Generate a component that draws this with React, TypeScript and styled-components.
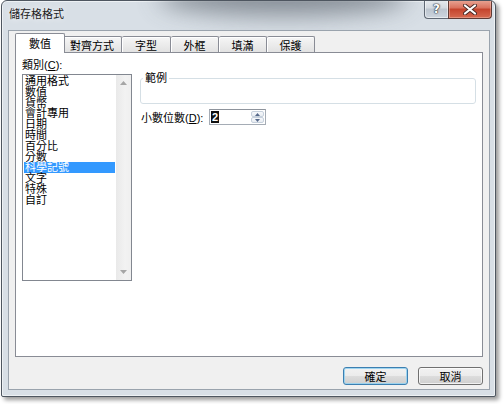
import React from "react";
import styled, { createGlobalStyle } from "styled-components";

const tabs = [
  { label: "數值", width: 46 },
  { label: "對齊方式", width: 59 },
  { label: "字型", width: 49 },
  { label: "外框", width: 48 },
  { label: "填滿", width: 48 },
  { label: "保護", width: 48 },
];

const categories = [
  "通用格式",
  "數值",
  "貨幣",
  "會計專用",
  "日期",
  "時間",
  "百分比",
  "分數",
  "科學記號",
  "文字",
  "特殊",
  "自訂",
];

function Arrow({ up, color, size = 7 }: { up?: boolean; color: string; size?: number }) {
  const h = Math.round(size / 2);
  return (
    <svg width={size} height={h} viewBox={`0 0 ${size} ${h}`}>
      <path
        d={up ? `M0 ${h} L${size / 2} 0 L${size} ${h} Z` : `M0 0 L${size} 0 L${size / 2} ${h} Z`}
        fill={color}
      />
    </svg>
  );
}

function App() {
  const [activeTab, setActiveTab] = React.useState(0);
  const [selected, setSelected] = React.useState(8);

  return (
    <Page>
      <GlobalStyle />
      <Window>
        <TitleBar>
          <Title>儲存格格式</Title>
          <CaptionButtons>
            <HelpButton>?</HelpButton>
            <CloseButton>
              <svg width="14" height="11" viewBox="0 0 14 11">
                <path d="M2 1.5 L12 9.5 M12 1.5 L2 9.5" stroke="#4a2a26" strokeWidth="4" strokeLinecap="round" />
                <path d="M2 1.5 L12 9.5 M12 1.5 L2 9.5" stroke="#ffffff" strokeWidth="2.2" strokeLinecap="round" />
              </svg>
            </CloseButton>
          </CaptionButtons>
        </TitleBar>

        <Client>
          <TabStrip>
            {tabs.map((tab, index) => (
              <Tab
                key={tab.label}
                $width={tab.width}
                $active={index === activeTab}
                $first={index === 0}
                onClick={() => setActiveTab(index)}
              >
                {tab.label}
              </Tab>
            ))}
          </TabStrip>

          <Panel>
            <LeftColumn>
              <FieldLabel>
                類別(<u>C</u>):
              </FieldLabel>
              <ListBox>
                <ListItems>
                  {categories.map((item, index) => (
                    <ListItem key={item} $selected={index === selected} onClick={() => setSelected(index)}>
                      {item}
                    </ListItem>
                  ))}
                </ListItems>
                <ScrollBar>
                  <ScrollArrow>
                    <Arrow up color="#a6a6a6" />
                  </ScrollArrow>
                  <ScrollArrow>
                    <Arrow color="#a6a6a6" />
                  </ScrollArrow>
                </ScrollBar>
              </ListBox>
            </LeftColumn>

            <RightColumn>
              <Sample>
                <SampleLegend>範例</SampleLegend>
              </Sample>
              <DecimalRow>
                <DecimalLabel>
                  小數位數(<u>D</u>):
                </DecimalLabel>
                <SpinBox>
                  <SpinValue>
                    <Selection>2</Selection>
                  </SpinValue>
                  <SpinButtons>
                    <SpinButton>
                      <Arrow up color="#56698a" size={5} />
                    </SpinButton>
                    <SpinButton>
                      <Arrow color="#56698a" size={5} />
                    </SpinButton>
                  </SpinButtons>
                </SpinBox>
              </DecimalRow>
            </RightColumn>
          </Panel>

          <ButtonRow>
            <DialogButton $default>確定</DialogButton>
            <DialogButton>取消</DialogButton>
          </ButtonRow>
        </Client>
      </Window>
    </Page>
  );
}

const GlobalStyle = createGlobalStyle`
  html, body {
    margin: 0;
    padding: 0;
    background: #ffffff;
  }
  body {
    font-family: "Liberation Sans", "Noto Sans CJK TC", sans-serif;
    font-size: 11px;
    color: #000000;
  }
`;

const Page = styled.div`
  width: 504px;
  height: 404px;
  padding-left: 1px;
  box-sizing: border-box;
`;

const Window = styled.div`
  box-sizing: border-box;
  width: 495px;
  height: 397px;
  border: 1px solid #4e5660;
  border-radius: 6px 6px 2px 2px;
  padding: 0 5px 6px 6px;
  display: flex;
  flex-direction: column;
  overflow: hidden;
  background-color: #d8dfe6;
  box-shadow: inset 0 0 0 1px rgba(255, 255, 255, 0.55), 3px 3px 4px rgba(0, 0, 0, 0.4);
`;

/* the dark glass smudge of the aero caption sits behind the title and buttons */
const TitleBar = styled.div`
  position: relative;
  height: 29px;
  display: flex;
  justify-content: space-between;
  align-items: flex-start;

  &::before {
    content: "";
    position: absolute;
    left: 150px;
    top: -22px;
    width: 250px;
    height: 36px;
    border-radius: 50%;
    background: #6f7780;
    filter: blur(12px);
    opacity: 0.8;
  }
`;

const Title = styled.div`
  position: relative;
  margin: 6px 0 0 1px;
  line-height: 14px;
  font-size: 11px;
  color: #1c1c1c;
  text-shadow: 0 0 6px rgba(255, 255, 255, 0.9);
`;

const CaptionButtons = styled.div`
  position: relative;
  display: flex;
  margin-right: -2px;
  margin-top: -1px;
`;

const HelpButton = styled.div`
  box-sizing: border-box;
  width: 24px;
  height: 19px;
  border: 1px solid #5f6874;
  border-right: none;
  border-top: none;
  border-radius: 0 0 0 4px;
  background: linear-gradient(180deg, #e7ebef 0%, #d3d9e0 45%, #bcc5cf 50%, #cdd5de 100%);
  box-shadow: inset 0 0 0 1px rgba(255, 255, 255, 0.5);
  display: flex;
  align-items: center;
  justify-content: center;
  font-family: "DejaVu Sans", sans-serif;
  font-weight: bold;
  font-size: 12px;
  color: #ffffff;
  text-shadow: 0 0 1px #2a3038, 0 0 1px #2a3038, 0 0 2px #2a3038;
`;

const CloseButton = styled.div`
  box-sizing: border-box;
  width: 44px;
  height: 19px;
  border: 1px solid #5f3a34;
  border-top: none;
  border-radius: 0 0 4px 0;
  background: linear-gradient(180deg, #e9a797 0%, #d9705c 45%, #c4432c 50%, #d66a50 100%);
  box-shadow: inset 0 0 0 1px rgba(255, 220, 210, 0.35);
  display: flex;
  align-items: center;
  justify-content: center;
`;

const Client = styled.div`
  position: relative;
  box-sizing: border-box;
  height: 360px;
  border: 1px solid #9aa3ad;
  background: #f0f0f0;
  padding: 2px 6px 4px 6px;
  display: flex;
  flex-direction: column;
`;

const TabStrip = styled.div`
  height: 19px;
  display: flex;
  align-items: flex-end;
  padding-left: 2px;
`;

const Tab = styled.div<{ $width: number; $active: boolean; $first: boolean }>`
  box-sizing: border-box;
  position: relative;
  width: ${(p) => (p.$active ? p.$width + 4 : p.$width)}px;
  height: ${(p) => (p.$active ? 20 : 16)}px;
  margin: ${(p) => (p.$active ? "0 -2px -1px -2px" : "0")};
  z-index: ${(p) => (p.$active ? 1 : 0)};
  border: 1px solid #898c95;
  border-bottom: none;
  border-left-width: ${(p) => (p.$active || p.$first ? 1 : 0)}px;
  border-radius: 2px 2px 0 0;
  background: ${(p) => (p.$active ? "#ffffff" : "linear-gradient(180deg, #f6f6f6 0%, #ececec 50%, #e2e2e2 100%)")};
  box-shadow: ${(p) => (p.$active ? "none" : "inset 1px 1px 0 #ffffff")};
  display: flex;
  align-items: center;
  justify-content: center;
  padding-bottom: ${(p) => (p.$active ? 2 : 0)}px;
  font-size: 11px;
  cursor: default;
`;

const Panel = styled.div`
  box-sizing: border-box;
  height: 305px;
  background: #ffffff;
  border: 1px solid #898c95;
  padding: 6px 6px 0 6px;
  display: flex;
`;

const LeftColumn = styled.div`
  width: 110px;
  display: flex;
  flex-direction: column;
`;

const FieldLabel = styled.div`
  line-height: 13px;
  margin-bottom: 2px;
`;

const ListBox = styled.div`
  box-sizing: border-box;
  height: 207px;
  border: 1px solid #828790;
  display: flex;
`;

const ListItems = styled.div`
  flex: 1;
  padding: 1px;
`;

const ListItem = styled.div<{ $selected: boolean }>`
  height: 10.8px;
  line-height: 10.8px;
  padding-left: 1px;
  white-space: nowrap;
  font-size: 11px;
  background: ${(p) => (p.$selected ? "#3399ff" : "transparent")};
  color: ${(p) => (p.$selected ? "#ffffff" : "#000000")};
`;

const ScrollBar = styled.div`
  width: 15px;
  background: linear-gradient(90deg, #e9e9e9 0%, #f2f2f2 60%, #efefef 100%);
  display: flex;
  flex-direction: column;
  justify-content: space-between;
`;

const ScrollArrow = styled.div`
  height: 16px;
  display: flex;
  align-items: center;
  justify-content: center;
`;

const RightColumn = styled.div`
  flex: 1;
  margin: 13px 0 0 8px;
  display: flex;
  flex-direction: column;
`;

const Sample = styled.fieldset`
  box-sizing: border-box;
  margin: 0;
  padding: 0;
  min-width: 0;
  height: 32px;
  border: 1px solid #d5dfe5;
  border-radius: 3px;
`;

const SampleLegend = styled.legend`
  margin-left: 2px;
  padding: 0 2px;
  line-height: 13px;
  font-size: 11px;
`;

const DecimalRow = styled.div`
  margin-top: 5px;
  height: 16px;
  display: flex;
  align-items: center;
`;

const DecimalLabel = styled.div`
  width: 69px;
  padding-left: 1px;
  box-sizing: border-box;
  white-space: nowrap;
`;

const SpinBox = styled.div`
  box-sizing: border-box;
  width: 57px;
  height: 16px;
  border: 1px solid #a5acb5;
  border-top-color: #8e949c;
  background: #ffffff;
  display: flex;
  padding: 1px;
`;

const SpinValue = styled.div`
  flex: 1;
  display: flex;
  align-items: stretch;
`;

const Selection = styled.span`
  display: flex;
  align-items: center;
  padding: 0 1px;
  background: #111111;
  color: #ffffff;
  font-weight: bold;
  font-size: 11px;
`;

const SpinButtons = styled.div`
  width: 13px;
  display: flex;
  flex-direction: column;
`;

const SpinButton = styled.div`
  flex: 1;
  box-sizing: border-box;
  border: 1px solid #c6d0dc;
  border-radius: 2px;
  background: linear-gradient(180deg, #f6f8fb 0%, #e8edf2 100%);
  display: flex;
  align-items: center;
  justify-content: center;
`;

const ButtonRow = styled.div`
  margin-top: 10px;
  display: flex;
  justify-content: flex-end;
  gap: 10px;
`;

const DialogButton = styled.button<{ $default?: boolean }>`
  box-sizing: border-box;
  width: 65px;
  height: 18px;
  padding: 0;
  border: 1px solid ${(p) => (p.$default ? "#3c7fb1" : "#707070")};
  border-radius: 3px;
  background: linear-gradient(180deg, #f2f2f2 0%, #ebebeb 50%, #dddddd 50%, #cfcfcf 100%);
  box-shadow: inset 0 0 0 1px ${(p) => (p.$default ? "rgba(150, 210, 240, 0.9)" : "rgba(255, 255, 255, 0.7)")};
  font-family: "Liberation Sans", "Noto Sans CJK TC", sans-serif;
  font-size: 11px;
  color: #000000;
  cursor: default;
`;

export default App;
